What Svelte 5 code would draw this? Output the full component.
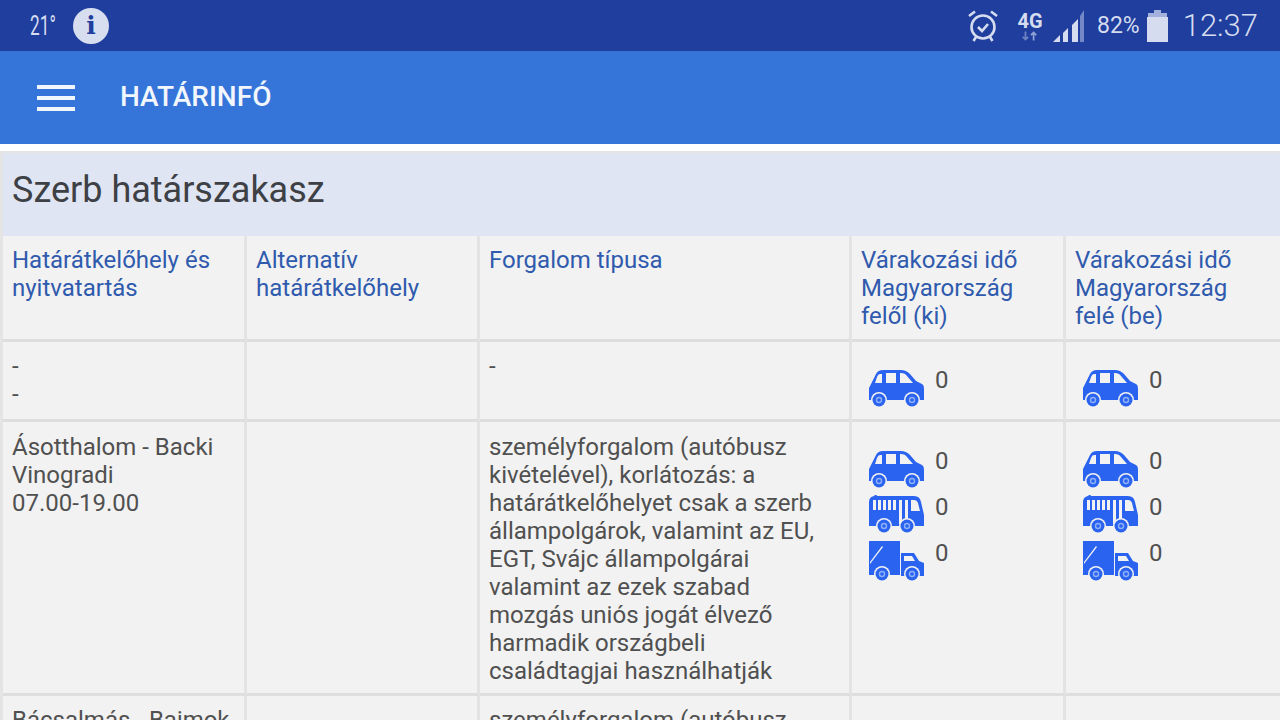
<script lang="ts">
	interface Row {
		place: string[];
		traffic: string;
		vehicles: string[];
	}

	const headers = [
		'Határátkelőhely és nyitvatartás',
		'Alternatív határátkelőhely',
		'Forgalom típusa',
		'Várakozási idő Magyarország felől (ki)',
		'Várakozási idő Magyarország felé (be)'
	];

	const rows: Row[] = [
		{ place: ['-', '-'], traffic: '-', vehicles: ['car'] },
		{
			place: ['Ásotthalom - Backi Vinogradi', '07.00-19.00'],
			traffic:
				'személyforgalom (autóbusz kivételével), korlátozás: a határátkelőhelyet csak a szerb állampolgárok, valamint az EU, EGT, Svájc állampolgárai valamint az ezek szabad mozgás uniós jogát élvező harmadik országbeli családtagjai használhatják',
			vehicles: ['car', 'bus', 'truck']
		},
		{
			place: ['Bácsalmás - Bajmok'],
			traffic: 'személyforgalom (autóbusz',
			vehicles: []
		}
	];
</script>

{#snippet wheel(x: number, y: number)}
	<circle class="wheel-gap" cx={x} cy={y} r="8" />
	<circle cx={x} cy={y} r="6.5" />
	<circle class="wheel-hub" cx={x} cy={y} r="3.2" />
	<circle cx={x} cy={y} r="1.8" />
{/snippet}

{#snippet vehicle(kind: string)}
	<svg class="vehicle" viewBox={kind === 'car' ? '0 0 57 41' : '0 2 57 41'} aria-hidden="true">
		{#if kind === 'car'}
			<path fill-rule="evenodd" d="M1 20 L8 6 Q10 2 15 2 H33 Q38 2 42 6 L48 13 L54 16 Q56 17 56 21 V32 H1 Z M7 15 H14 V6 H12 Q10 6 9 9 Z M18 5 V15 H28 V5 Z M32 5 V15 H45 L39 8 Q37 5 33 5 Z" />
			{@render wheel(11, 32)}
			{@render wheel(44, 32)}
		{:else if kind === 'bus'}
			<path fill-rule="evenodd" d="M1 9 Q1 4 6 3 L8 1 L9 3 H46 Q52 3 53 9 L56 22 V33 H1 Z M5 7 V17 H8 V7 Z M10 7 V17 H13 V7 Z M15 7 V17 H18 V7 Z M20 7 V17 H23 V7 Z M25 7 V17 H28 V7 Z M31 7 V31 H34 V7 Z M37 7 V31 H40 V7 Z M43 7 V18 H52 L50 10 Q49 7 46 7 Z" />
			{@render wheel(16, 33)}
			{@render wheel(39, 33)}
		{:else}
			<path fill-rule="evenodd" d="M1 2 H32 V36 H1 Z M2 23 L2 25 L15 8 L14 7 Z" />
			<path fill-rule="evenodd" d="M33 14 H46 L51 22 L56 24 V37 H33 Z M36 17 V22 H47 L44 17 Z" />
			{@render wheel(14, 35)}
			{@render wheel(44, 35)}
		{/if}
	</svg>
{/snippet}

{#snippet waiting(kinds: string[])}
	<div class="waiting">
		{#each kinds as kind}
			<div class="wait-row">
				{@render vehicle(kind)}
				<span>0</span>
			</div>
		{/each}
	</div>
{/snippet}

<div class="screen">
	<div class="status-bar">
		<div class="status-left">
			<span class="temp">21°</span>
			<span class="info">i</span>
		</div>
		<div class="status-right">
			<svg class="alarm" viewBox="0 0 32 34" aria-hidden="true">
				<circle cx="16" cy="18" r="11.5" />
				<path d="M2 7 L8 2.5 M30 7 L24 2.5 M9 28 L6.5 32 M23 28 L25.5 32 M11 18 L15 22 L21 15" />
			</svg>
			<div class="network">
				<span>4G</span>
				<svg viewBox="0 0 20 10" aria-hidden="true">
					<path class="arrow-dim" d="M5 0 V9 M2 6 L5 9 L8 6" />
					<path class="arrow-lit" d="M14 10 V1 M11 4 L14 1 L17 4" />
				</svg>
			</div>
			<svg class="signal" viewBox="0 0 31 32" aria-hidden="true">
				<path d="M0 32 H7 V25 Z" />
				<path d="M10 32 H15 V18 L10 23 Z" />
				<path d="M19 32 H25 V9 L19 15 Z" />
				<path class="signal-off" d="M27 32 H31 V0 L27 6 Z" />
			</svg>
			<span class="battery-pct">82%</span>
			<svg class="battery" viewBox="0 0 21 32" aria-hidden="true">
				<path class="battery-top" d="M7 0 H14 V3 H20 V8 H1 V3 H7 Z" />
				<rect x="0" y="7" width="21" height="25" />
			</svg>
			<span class="clock">12:37</span>
		</div>
	</div>

	<header class="app-bar">
		<div class="burger"><i></i><i></i><i></i></div>
		<h1>HATÁRINFÓ</h1>
	</header>

	<main class="content">
		<h2>Szerb határszakasz</h2>
		<table>
			<colgroup>
				<col class="c1" /><col class="c2" /><col class="c3" /><col class="c4" /><col class="c5" />
			</colgroup>
			<thead>
				<tr>
					{#each headers as header}
						<th>{header}</th>
					{/each}
				</tr>
			</thead>
			<tbody>
				{#each rows as row}
					<tr>
						<td>
							{#each row.place as line}
								<div>{line}</div>
							{/each}
						</td>
						<td></td>
						<td>{row.traffic}</td>
						<td>{@render waiting(row.vehicles)}</td>
						<td>{@render waiting(row.vehicles)}</td>
					</tr>
				{/each}
			</tbody>
		</table>
	</main>
</div>

<style>
	:global(body) {
		margin: 0;
		background: #fff;
		overflow: hidden;
		font-family: Roboto, 'Liberation Sans', sans-serif;
	}

	.screen {
		width: 1280px;
		height: 720px;
		overflow: hidden;
		display: flex;
		flex-direction: column;
	}

	.status-bar {
		flex: 0 0 51px;
		background: #1f3e9d;
		color: #d5dcf0;
		display: flex;
		justify-content: space-between;
		align-items: center;
		padding: 0 22px 0 30px;
	}

	.status-left {
		display: flex;
		align-items: center;
		gap: 15px;
	}

	.temp {
		font-size: 27px;
		display: inline-block;
		width: 28px;
		transform: scaleX(0.64);
		transform-origin: left center;
	}

	.info {
		width: 36px;
		height: 36px;
		border-radius: 50%;
		background: #d7deef;
		color: #1f3e9d;
		font: bold 25px/36px 'DejaVu Serif', serif;
		text-align: center;
	}

	.status-right {
		display: flex;
		align-items: center;
	}

	.alarm {
		width: 32px;
		height: 34px;
		fill: none;
		stroke: #d5dcf0;
		stroke-width: 2.6;
		margin-right: 17px;
	}

	.network {
		width: 28px;
		display: flex;
		flex-direction: column;
		align-items: center;
		margin-right: 9px;
	}

	.network span {
		font-size: 20px;
		font-weight: 700;
		line-height: 20px;
	}

	.network svg {
		width: 18px;
		height: 10px;
		fill: none;
		stroke-width: 2;
	}

	.arrow-dim {
		stroke: #6f83c4;
	}

	.arrow-lit {
		stroke: #8ea0d4;
	}

	.signal {
		width: 31px;
		height: 32px;
		fill: #d5dcf0;
		margin-right: 13px;
	}

	.signal .signal-off {
		fill: #7488c8;
	}

	.battery-pct {
		font-size: 23px;
		margin-right: 7px;
	}

	.battery {
		width: 21px;
		height: 32px;
		fill: #d5dcf0;
		margin-right: 15px;
	}

	.battery .battery-top {
		fill: #a3b1dc;
	}

	.clock {
		font-size: 31px;
		font-weight: 300;
	}

	.app-bar {
		flex: 0 0 93px;
		background: #3575d9;
		display: flex;
		align-items: center;
		padding-left: 37px;
		color: #f2f6fd;
	}

	.burger {
		width: 38px;
		display: flex;
		flex-direction: column;
		gap: 7px;
		margin-right: 45px;
	}

	.burger i {
		display: block;
		height: 4px;
		background: #f2f6fd;
	}

	h1 {
		margin: 0 0 2px;
		font-size: 28px;
		font-weight: 500;
	}

	.content {
		flex: 1;
		margin-top: 7px;
		background: #e4e4e4;
		padding: 2px 0 0 3px;
		min-height: 0;
	}

	h2 {
		margin: 0;
		height: 83px;
		background: #dfe5f3;
		color: #3d4044;
		font-size: 36px;
		font-weight: 400;
		line-height: 75px;
		padding-left: 9px;
	}

	table {
		width: 1277px;
		table-layout: fixed;
		border-collapse: separate;
		border-spacing: 0;
		font-size: 24px;
		line-height: 28px;
	}

	.c1 {
		width: 244px;
	}

	.c2 {
		width: 233px;
	}

	.c3 {
		width: 372px;
	}

	.c4,
	.c5 {
		width: 214px;
	}

	th,
	td {
		background: #f2f2f2;
		border-right: 3px solid #e3e3e3;
		border-bottom: 3px solid #dedede;
		padding: 10px 10px 10px 9px;
		text-align: left;
		vertical-align: top;
		font-weight: 400;
		color: #505050;
		overflow: hidden;
	}

	th:last-child,
	td:last-child {
		border-right: none;
	}

	th {
		color: #2f5aad;
		padding-bottom: 9px;
	}

	tbody tr:first-child td {
		height: 79px;
		box-sizing: border-box;
	}

	tbody tr:nth-child(2) td {
		padding-top: 11px;
		padding-bottom: 8px;
	}

	.waiting {
		display: flex;
		flex-direction: column;
		gap: 5px;
		padding: 16px 0 0 7px;
	}

	.wait-row {
		display: flex;
		align-items: flex-start;
		gap: 10px;
		height: 41px;
		line-height: 24px;
	}

	.vehicle {
		width: 57px;
		height: 41px;
		fill: #2a63f0;
		flex: none;
	}

	.wheel-gap {
		fill: #f2f2f2;
	}

	.wheel-hub {
		fill: #8fb0f7;
	}
</style>
